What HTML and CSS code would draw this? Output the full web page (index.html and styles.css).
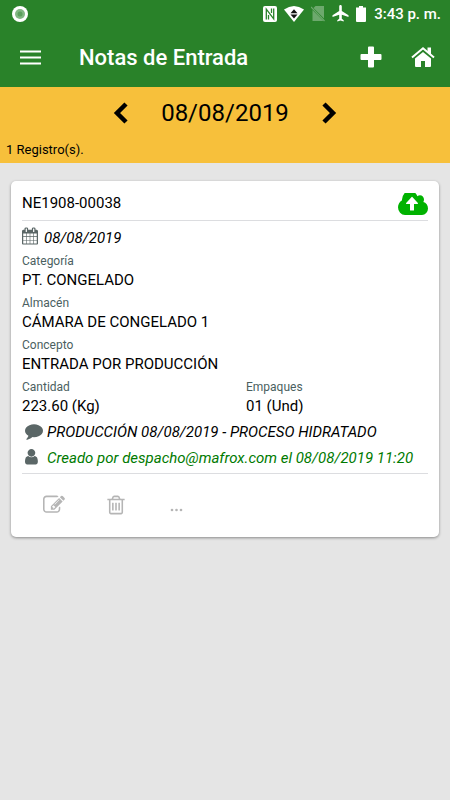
FILE: index.html
```html
<!DOCTYPE html>
<html lang="es">
<head>
<meta charset="utf-8">
<meta name="viewport" content="width=device-width, initial-scale=1">
<title>Notas de Entrada</title>
<link rel="stylesheet" href="styles.css">
</head>
<body>
<div class="status">
  <svg class="status-dot" viewBox="0 0 16 16" aria-hidden="true"><circle cx="8" cy="8" r="8" fill="#fff"/><circle cx="8" cy="8" r="5" fill="#82b783"/><circle cx="8" cy="8" r="2.500" fill="#5c9f5d"/></svg>
  <div class="status-icons">
    <svg width="14" height="16" viewBox="0 0 14 16" aria-hidden="true"><rect width="14" height="16" rx="2" fill="#fff"/><path d="M3.300 13.500V3.200L10.700 12.800V2.500M5.500 13.500V9M8.500 2.500V7" fill="none" stroke="#298229" stroke-width="1.300"/></svg>
    <svg width="20" height="16" viewBox="0 0 20 16" aria-hidden="true"><path d="M0 3.500Q10-3.500 20 3.500L10 16z" fill="#fff"/><path d="M10 3.200l3.500 4h-7zM6.500 8.600h7l-3.500 4z" fill="#111"/></svg>
    <svg width="14" height="16" viewBox="0 0 14 16" aria-hidden="true"><path d="M4.500 0H13v12.500L2.500 2zM1.500 4L12.500 15H1.500z" fill="#6da96d"/><path d="M0 1l13.500 14" stroke="#6da96d" stroke-width="1.200"/></svg>
    <svg width="17" height="17" viewBox="0 0 17 17" aria-hidden="true"><path d="M8.500 0c.8 0 1.300.6 1.300 1.400v4.700L16.500 10.200v1.700L9.800 9.800v4l1.900 1.400v1.300l-3.200-.9-3.200.9v-1.300l1.900-1.400v-4L.5 11.900v-1.700l6.700-4.100V1.400C7.200.6 7.700 0 8.500 0z" fill="#fff"/></svg>
    <svg width="10" height="16" viewBox="0 0 10 16" aria-hidden="true"><path d="M3 0h4v1.500h3V15q0 1-1 1H1q-1 0-1-1V1.500h3z" fill="#fff"/></svg>
  </div>
  <span class="status-time">3:43 p. m.</span>
</div>
<header class="bar">
  <button class="icon-button" type="button" aria-label="Menú"><svg width="21" height="15" viewBox="0 0 21 15"><path d="M0 1.500h21M0 7.500h21M0 13.500h21" stroke="#fff" stroke-width="2"/></svg></button>
  <h1 class="bar-title">Notas de Entrada</h1>
  <button class="icon-button" type="button" aria-label="Agregar"><svg width="22" height="22" viewBox="0 0 22 22"><path d="M9 .5h4q1 0 1 1V8h6.500q1 0 1 1v4q0 1-1 1H14v6.500q0 1-1 1H9q-1 0-1-1V14H1.500q-1 0-1-1V9q0-1 1-1H8V1.500q0-1 1-1z" fill="#fff"/></svg></button>
  <a class="icon-button" href="#" aria-label="Inicio"><svg width="24" height="22" viewBox="0 0 24 22"><path d="M12 6l8 6.500V20q0 1-1 1h-5v-6h-4v6H5q-1 0-1-1v-7.500z" fill="#fff"/><path d="M1 11.500L12 2.200l11 9.300" fill="none" stroke="#fff" stroke-width="2"/><path d="M16.500 1.500H20v7.500l-3.500-3z" fill="#fff"/></svg></a>
</header>
<section class="filter">
  <div class="date-nav">
    <button class="icon-button" type="button" aria-label="Día anterior"><svg width="16" height="22" viewBox="0 0 16 22"><path d="M13 2L4 11l9 9" fill="none" stroke="#000" stroke-width="4.500"/></svg></button>
    <span class="date">08/08/2019</span>
    <button class="icon-button" type="button" aria-label="Día siguiente"><svg width="16" height="22" viewBox="0 0 16 22"><path d="M3 2l9 9-9 9" fill="none" stroke="#000" stroke-width="4.500"/></svg></button>
  </div>
  <p class="count">1 Registro(s).</p>
</section>
<main>
  <article class="card">
    <header class="card-head">
      <h2 class="value">NE1908-00038</h2>
      <svg class="cloud" viewBox="0 256 1920 1280" aria-hidden="true" preserveAspectRatio="none"><path fill="#00b200" d="M1280 864q0-14-9-23l-352-352q-9-9-23-9t-23 9l-351 351q-10 12-10 24 0 14 9 23t23 9h224v352q0 13 9.500 22.500t22.500 9.500h192q13 0 22.500-9.500t9.500-22.500v-352h224q13 0 22.500-9.500t9.500-22.500zm640 288q0 159-112.500 271.500t-271.500 112.500h-1088q-185 0-316.500-131.500t-131.500-316.500q0-130 70-240t188-165q-2-30-2-43 0-212 150-362t362-150q156 0 285.500 87t188.500 231q71-62 166-62 106 0 181 75t75 181q0 76-41 138 130 31 213.500 135.500t83.500 238.500z"/></svg>
    </header>
    <p class="day"><svg width="16" height="18" viewBox="64 0 1664 1792" aria-hidden="true"><path fill="#5b6767" d="M192 1664h288v-288h-288v288zm352 0h320v-288h-320v288zm-352-352h288v-320h-288v320zm352 0h320v-320h-320v320zm-352-384h288v-288h-288v288zm736 736h320v-288h-320v288zm-384-736h320v-288h-320v288zm768 736h288v-288h-288v288zm-384-352h320v-320h-320v320zm-352-864v-288q0-13-9.500-22.500t-22.500-9.500h-64q-13 0-22.500 9.500t-9.500 22.500v288q0 13 9.500 22.500t22.500 9.500h64q13 0 22.500-9.500t9.500-22.500zm736 864h288v-320h-288v320zm-384-384h320v-288h-320v288zm384 0h288v-288h-288v288zm32-480v-288q0-13-9.500-22.500t-22.500-9.500h-64q-13 0-22.500 9.500t-9.500 22.500v288q0 13 9.500 22.500t22.500 9.500h64q13 0 22.500-9.500t9.500-22.500zm384-64v1280q0 52-38 90t-90 38h-1408q-52 0-90-38t-38-90v-1280q0-52 38-90t90-38h128v-96q0-66 47-113t113-47h64q66 0 113 47t47 113v96h384v-96q0-66 47-113t113-47h64q66 0 113 47t47 113v96h128q52 0 90 38t38 90z"/></svg><em>08/08/2019</em></p>
    <dl class="fields">
      <div class="field wide"><dt>Categoría</dt><dd class="value">PT. CONGELADO</dd></div>
      <div class="field wide"><dt>Almacén</dt><dd class="value">CÁMARA DE CONGELADO 1</dd></div>
      <div class="field wide"><dt>Concepto</dt><dd class="value">ENTRADA POR PRODUCCIÓN</dd></div>
      <div class="field"><dt>Cantidad</dt><dd class="value">223.60 (Kg)</dd></div>
      <div class="field"><dt>Empaques</dt><dd class="value">01 (Und)</dd></div>
    </dl>
    <div class="notes">
      <p class="note"><svg class="note-icon" viewBox="0 128 1792 1792" aria-hidden="true"><path fill="#5b6767" d="M1792 896q0 174-120 321.500t-326 233-450 85.500q-70 0-145-8-198 175-460 242-49 14-114 22-17 2-30.500-9t-17.500-29v-1q-3-4-.5-12t2-10 4.500-9.500l6-9 7-8.500 8-9q7-8 31-34.500t34.500-38 31-39.500 32.500-51 27-59 26-76q-157-89-247.500-220t-90.500-281q0-174 120-321.500t326-233 450-85.500 450 85.500 326 233 120 321.500z"/></svg><em>PRODUCCIÓN 08/08/2019 - PROCESO HIDRATADO</em></p>
      <p class="note author"><svg class="note-icon" viewBox="256 128 1792 1792" aria-hidden="true"><path fill="#5b6767" d="M1536 1399q0 109-62.500 187t-150.500 78h-854q-88 0-150.500-78t-62.500-187q0-85 8.500-160.500t31.500-152 58.500-131 94-89 134.500-34.500q131 128 313 128t313-128q76 0 134.500 34.500t94 89 58.500 131 31.500 152 8.500 160.500zm-256-887q0 159-112.500 271.500t-271.500 112.500-271.500-112.500-112.500-271.500 112.500-271.500 271.500-112.500 271.500 112.500 112.500 271.500z"/></svg><em>Creado por despacho@mafrox.com el 08/08/2019 11:20</em></p>
    </div>
    <footer class="actions">
      <button class="action" type="button" aria-label="Editar"><svg width="22" height="22" viewBox="0 0 1792 1792"><path fill="#b5b5b5" d="M888 1184l116-116-152-152-116 116v56h96v96h56zm440-720q-16-16-33 1l-350 350q-17 17-1 33t33-1l350-350q17-17 1-33zm80 594v190q0 119-84.500 203.500t-203.500 84.500h-832q-119 0-203.500-84.500t-84.500-203.500v-832q0-119 84.500-203.500t203.500-84.500h832q63 0 117 25 15 7 18 23 3 17-9 29l-49 49q-14 14-32 8-23-6-45-6h-832q-66 0-113 47t-47 113v832q0 66 47 113t113 47h832q66 0 113-47t47-113v-126q0-13 9-22l64-64q15-15 35-7t20 29zm-96-738l288 288-672 672h-288v-288zm444 132l-92 92-288-288 92-92q28-28 68-28t68 28l152 152q28 28 28 68t-28 68z"/></svg></button>
      <button class="action" type="button" aria-label="Eliminar"><svg width="22" height="22" viewBox="0 0 1792 1792"><path fill="#b5b5b5" d="M704 736v576q0 14-9 23t-23 9h-64q-14 0-23-9t-9-23v-576q0-14 9-23t23-9h64q14 0 23 9t9 23zm256 0v576q0 14-9 23t-23 9h-64q-14 0-23-9t-9-23v-576q0-14 9-23t23-9h64q14 0 23 9t9 23zm256 0v576q0 14-9 23t-23 9h-64q-14 0-23-9t-9-23v-576q0-14 9-23t23-9h64q14 0 23 9t9 23zm128 724v-948h-896v948q0 22 7 40.500t14.500 27 10.500 8.500h832q3 0 10.500-8.500t14.500-27 7-40.500zm-672-1076h448l-48-117q-7-9-17-11h-317q-10 2-17 11zm928 32v64q0 14-9 23t-23 9h-96v948q0 83-47 143.500t-113 60.500h-832q-66 0-113-58.500t-47-141.500v-952h-96q-14 0-23-9t-9-23v-64q0-14 9-23t23-9h309l70-167q15-37 54-63t79-26h320q40 0 79 26t54 63l70 167h309q14 0 23 9t9 23z"/></svg></button>
      <button class="action" type="button" aria-label="Más opciones"><svg width="22" height="22" viewBox="0 0 22 22"><g fill="#b5b5b5"><circle cx="5" cy="16" r="1.300"/><circle cx="9.500" cy="16" r="1.300"/><circle cx="14" cy="16" r="1.300"/></g></svg></button>
    </footer>
  </article>
</main>
</body>
</html>
```
FILE: styles.css
```css
* { box-sizing: border-box; }
body, h1, h2, p, dl, dd { margin: 0; }
body {
  background: #e5e5e5;
  color: #000;
  font-family: Roboto, sans-serif;
  font-size: 15px;
  line-height: 20px;
}
svg { display: block; flex: none; }
button { padding: 0; border: 0; background: none; font: inherit; cursor: pointer; }

.status, .bar { display: flex; align-items: center; background: #298229; color: #fff; }
.status { justify-content: space-between; height: 27px; padding: 0 9px 0 12px; }
.status-dot { width: 16px; height: 16px; }
.status-icons { display: flex; align-items: center; gap: 7px; margin-left: auto; }
.status-time { margin-left: 8px; font-size: 15px; font-weight: 500; }

.bar { height: 60px; padding: 0 15px 0 20px; }
.icon-button { display: flex; align-items: center; justify-content: center; }
.bar-title { flex: 1; margin-left: 38px; padding-top: 2px; font-size: 22px; line-height: 28px; font-weight: 500; }
.bar .icon-button + .icon-button { margin-left: 29px; }

.filter { padding: 10px 6px 3px; background: #f7c03b; }
.date-nav { display: flex; align-items: center; justify-content: center; gap: 32px; }
.date { font-size: 24px; line-height: 32px; }
.count { margin-top: 11px; font-size: 13px; }

.card {
  margin: 18px 11px;
  padding: 11px;
  border-radius: 5px;
  background: #fff;
  box-shadow: 0 1px 3px rgba(0, 0, 0, .4);
}
.card-head {
  display: flex;
  align-items: flex-start;
  justify-content: space-between;
  height: 29px;
  border-bottom: 1px solid #dcdde0;
}
.value { font-size: 15px; line-height: 22px; font-weight: 400; }
.cloud { width: 30px; height: 22px; margin-top: 1px; }
.day { display: flex; align-items: flex-start; gap: 6px; padding-top: 6px; line-height: 22px; }
.fields { display: grid; grid-template-columns: 224px 1fr; margin-top: 4px; }
.wide { grid-column: 1 / -1; padding-bottom: 4px; }
dt { color: #4b5f5f; font-size: 12px; line-height: 16px; }
.notes { padding: 2px 0; }
.note { display: flex; align-items: center; gap: 4px; height: 26px; padding-left: 3px; }
.note-icon { width: 18px; height: 18px; }
.author { color: #007a00; }
.actions { display: flex; gap: 40px; padding: 20px 21px 10px; border-top: 1px solid #dcdde0; }
```
